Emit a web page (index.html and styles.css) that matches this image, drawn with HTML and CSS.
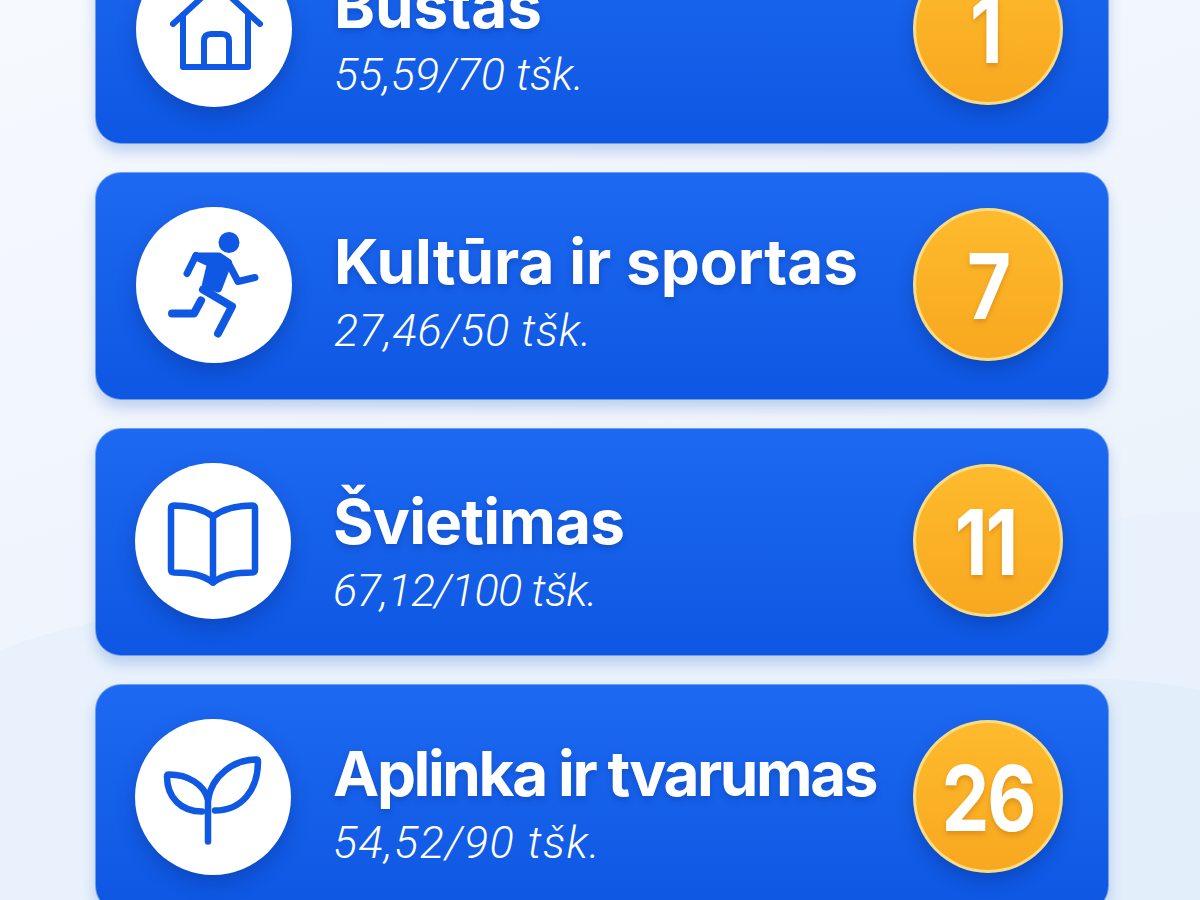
FILE: index.html
```html
<!DOCTYPE html>
<html lang="en">
<head>
  <meta charset="UTF-8">
  <title>Įvertinimai</title>
  <link rel="stylesheet" href="styles.css">
</head>

<body>
  <svg class="waves" width="1200" height="900" viewBox="0 0 1200 900">
    <path d="M0 650 C40 635 80 622 140 616 C400 590 650 690 900 640 C1000 560 1100 505 1200 512 V900 H0 Z" fill="#e9f2fc"/>
    <path d="M860 900 C880 760 920 690 1040 680 C1100 676 1150 680 1200 690 V900 Z" fill="#e3eefb"/>
  </svg>

  <div class="list">
    <div class="card">
      <div class="icon">
        <svg width="154" height="154" viewBox="0 0 154 154" fill="none" stroke="#0f58e4" stroke-width="6" stroke-linecap="round" stroke-linejoin="round">
          <path d="M36 72 L79.5 32 L123 72"/>
          <path d="M46 63 V115 H111 V63"/>
          <path d="M67 115 V89 Q67 82 74 82 H85 Q92 82 92 89 V115"/>
        </svg>
      </div>
      <div class="info">
        <h3>Būstas</h3>
        <p>55,59/70 tšk.</p>
      </div>
      <div class="badge badge-one"><span>1</span></div>
    </div>

    <div class="card">
      <div class="icon">
        <svg width="154" height="154" viewBox="0 1.5 154 154" fill="none" stroke="#0f58e4" stroke-width="8" stroke-linecap="round" stroke-linejoin="round">
          <circle cx="92" cy="36" r="10.5" fill="#0f58e4" stroke="none"/>
          <path d="M59 50 H82 L91 56 L81 82 L69 78 L74 57 Z" fill="#0f58e4" stroke-width="8"/>
          <path d="M59 49 L50 67" stroke-width="7"/>
          <path d="M91 56 L101 75 L118 71" stroke-width="7"/>
          <path d="M66 83 L95 100 L81 127"/>
          <path d="M64 94 L57 107 H35"/>
        </svg>
      </div>
      <div class="info">
        <h3>Kultūra ir sportas</h3>
        <p class="wide">27,46/50 tšk.</p>
      </div>
      <div class="badge"><span>7</span></div>
    </div>

    <div class="card card-left card-low">
      <div class="icon">
        <svg width="154" height="154" viewBox="0 1.5 154 154" fill="none" stroke="#0f58e4" stroke-width="6.5" stroke-linecap="round" stroke-linejoin="round">
          <path d="M77 54 C66 46 54 43 38 43 Q35 43 35 46 V107 Q35 110 38 110 C54 110 66 112 77 120 C88 112 100 110 116 110 Q119 110 119 107 V46 Q119 43 116 43 C100 43 88 46 77 54 Z"/>
          <path d="M77 54 V120"/>
        </svg>
      </div>
      <div class="info">
        <h3 class="tight-sm">Švietimas</h3>
        <p class="narrow">67,12/100 tšk.</p>
      </div>
      <div class="badge badge-one"><span>11</span></div>
    </div>

    <div class="card card-left">
      <div class="icon">
        <svg width="154" height="154" viewBox="0 2.5 154 154" fill="none" stroke="#0f58e4" stroke-width="6.5" stroke-linecap="round" stroke-linejoin="round">
          <path d="M72 124 V76"/>
          <path d="M72 82 C68 67 52 57 33 57 Q31 57 31 59 C31 80 45 94 66 94"/>
          <path d="M72 82 C76 58 98 42 120 42 Q122 42 122 44 C122 72 106 93 79 93"/>
        </svg>
      </div>
      <div class="info">
        <h3 class="tight">Aplinka ir tvarumas</h3>
        <p class="wider">54,52/90 tšk.</p>
      </div>
      <div class="badge"><span>26</span></div>
    </div>
  </div>
</body>

</html>
```

FILE: styles.css
```css
* {
  margin: 0;
  padding: 0;
  box-sizing: border-box;
}

body {
  width: 1200px;
  height: 900px;
  overflow: hidden;
  position: relative;
  background: linear-gradient(160deg, #f6f9fe 0%, #eef4fc 60%, #e6f0fb 100%);
  font-family: "Inter", "Liberation Sans", sans-serif;
}

.waves {
  position: absolute;
  left: 0;
  top: 0;
}

.list {
  position: relative;
  width: 1014px;
  margin: -84px 0 0 95px;
  display: flex;
  flex-direction: column;
  gap: 28px;
}

.card {
  height: 228px;
  padding: 0 45px 0 40px;
  display: flex;
  align-items: center;
  border: 1px solid #6f9ff5;
  border-radius: 26px;
  background: linear-gradient(180deg, #1e69f1 0%, #0d57e2 100%);
  box-shadow: 0 8px 14px rgba(60, 110, 200, 0.28);
}

.card-left {
  padding-left: 39px;
}

.card-low .info {
  padding-top: 20px;
}

.icon {
  width: 156px;
  height: 156px;
  margin-bottom: 3px;
  flex-shrink: 0;
  display: flex;
  align-items: center;
  justify-content: center;
  border-radius: 50%;
  background: #fff;
  box-shadow: 0 8px 18px rgba(5, 40, 130, 0.35);
}

.icon svg {
  display: block;
}

.info {
  flex: 1;
  margin-left: 42px;
  padding-top: 12px;
  color: #fff;
}

.info h3 {
  font-size: 62px;
  font-weight: 700;
  line-height: 66px;
  white-space: nowrap;
  text-shadow: 0 3px 6px rgba(5, 40, 130, 0.3);
}

.info h3.tight-sm {
  letter-spacing: -0.8px;
}

.info h3.tight {
  letter-spacing: -2.4px;
}

.info p {
  margin-top: 11px;
  font-family: "Roboto", "Liberation Sans", sans-serif;
  font-size: 45px;
  font-style: italic;
  font-weight: 300;
  line-height: 50px;
}

.info p.wide {
  letter-spacing: 0.6px;
}

.info p.wider {
  letter-spacing: 1.4px;
}

.info p.narrow {
  letter-spacing: -0.75px;
}

.badge {
  width: 150px;
  height: 153px;
  margin-bottom: 3px;
  flex-shrink: 0;
  display: flex;
  align-items: center;
  justify-content: center;
  border: 3px solid #fbdc80;
  border-radius: 50%;
  background: linear-gradient(180deg, #feba2d 0%, #f8a820 100%);
  box-shadow: 0 8px 16px rgba(5, 40, 130, 0.35);
  color: #fff;
  font-size: 76px;
  font-weight: 700;
  letter-spacing: -2px;
  text-shadow: 0 3px 5px rgba(170, 90, 0, 0.35);
}

.badge-one {
  padding-right: 5px;
}

.badge span {
  display: block;
  transform: scaleY(1.2);
}
```
